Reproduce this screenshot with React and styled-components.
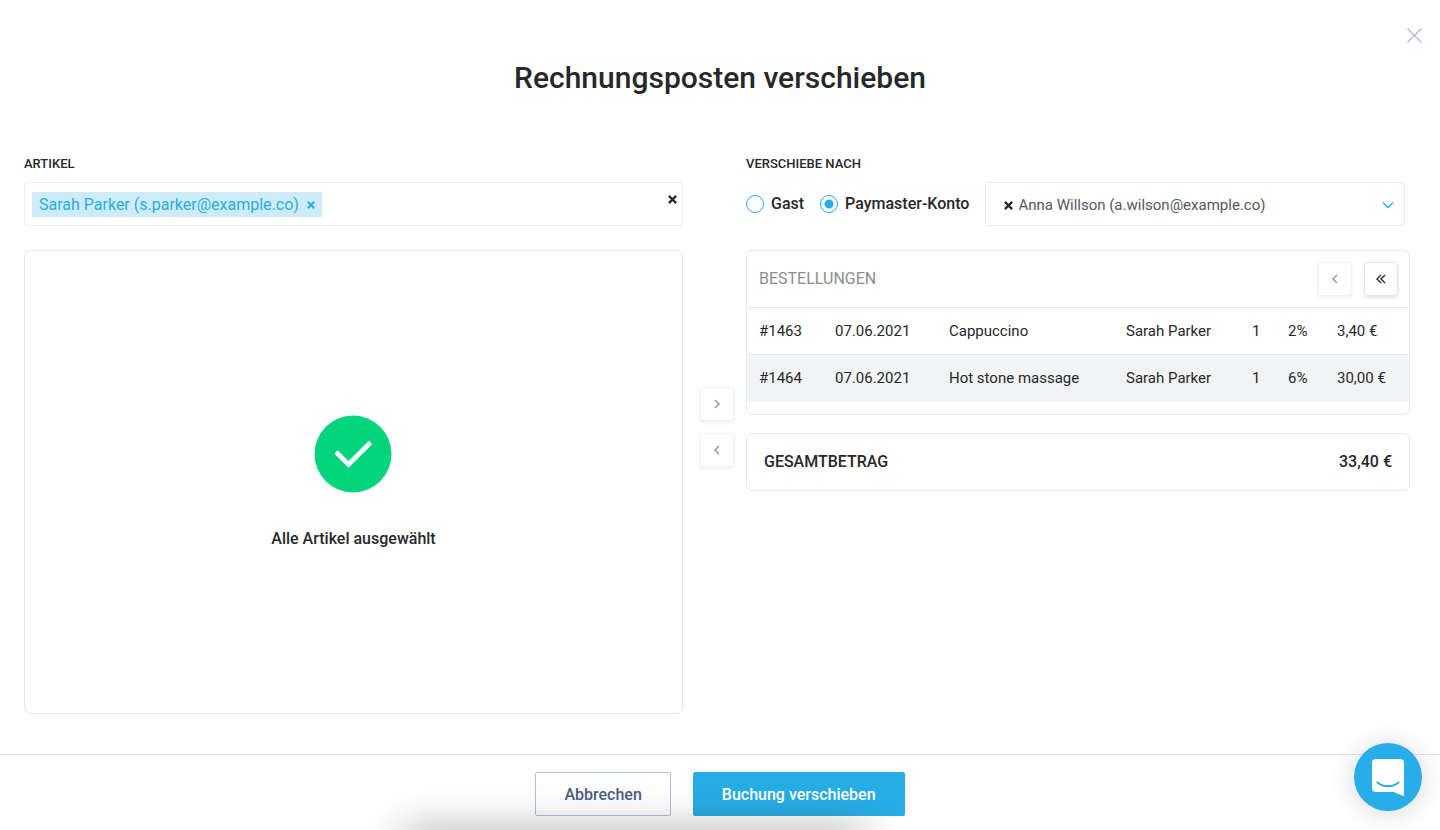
import React, { useState } from 'react';
import styled, { createGlobalStyle } from 'styled-components';

const GlobalStyle = createGlobalStyle`
  * {
    box-sizing: border-box;
  }
  body {
    margin: 0;
    background: #fff;
    color: #262829;
    font-family: Roboto, "Liberation Sans", sans-serif;
    font-size: 15px;
    line-height: 20px;
  }
  button, input, select {
    font: inherit;
    color: inherit;
  }
  button {
    padding: 0;
    border: 0;
    background: none;
    cursor: pointer;
  }
`

const Modal = styled.div`
  position: relative;
  display: flex;
  flex-direction: column;
  min-height: 100vh;
  overflow: hidden;
`

const CloseButton = styled.button`
  position: absolute;
  top: 28px;
  right: 18px;
  display: flex;
  color: #a9bad0;
`

const Title = styled.h1`
  margin: 0;
  padding: 58px 24px 56px;
  font-size: 30px;
  line-height: 40px;
  font-weight: 500;
  text-align: center;
`

const Content = styled.main`
  flex: 1;
  display: flex;
  padding: 0 30px 40px 24px;
`

const Column = styled.section`
  flex: ${(props) => props.$grow || 1} 1 0;
  min-width: 0;
  display: flex;
  flex-direction: column;
`

const ColumnLabel = styled.h2`
  margin: 0 0 9px;
  font-size: 13px;
  line-height: 19px;
  font-weight: 500;
  text-transform: uppercase;
`

const Field = styled.div`
  display: flex;
  align-items: center;
  flex: 1;
  height: 44px;
  border: 1px solid #e4ebf2;
  border-radius: 3px;
`

const TagField = styled(Field)`
  flex: none;
  padding: 0 5px 0 7px;
`

const Tag = styled.span`
  display: flex;
  align-items: center;
  gap: 8px;
  height: 25px;
  padding: 1px 7px 0;
  background: #ceecf8;
  color: #27ade5;
  font-size: 16px;
`

const TagInput = styled.input`
  flex: 1;
  min-width: 0;
  border: 0;
  outline: 0;
  background: none;
`

const ClearButton = styled.button`
  display: flex;
  align-self: ${(props) => (props.$top ? 'flex-start' : 'center')};
  padding: ${(props) => (props.$top ? '12px 0 0' : '0')};
`

const Panel = styled.div`
  margin-top: ${(props) => (props.$gap ? '18px' : '24px')};
  border: 1px solid #e6e9ee;
  border-radius: 6px;
`

const EmptyPanel = styled(Panel)`
  flex: 1;
  display: flex;
  flex-direction: column;
  align-items: center;
  justify-content: center;
  gap: 36px;
  font-size: 16px;
  font-weight: 500;
`

const Transfer = styled.div`
  display: flex;
  flex-direction: column;
  gap: 12px;
  margin: 233px 12px 0 17px;
`

const IconButton = styled.button`
  display: flex;
  align-items: center;
  justify-content: center;
  width: 34px;
  height: 34px;
  border: 1px solid #e1e5ef;
  border-radius: 3px;
  background: #fff;
  box-shadow: 0 2px 3px rgba(40, 50, 90, 0.12);
  &:disabled {
    opacity: 0.5;
    cursor: default;
  }
`

const TargetRow = styled.div`
  display: flex;
  align-items: center;
  padding-right: 5px;
`

const RadioLabel = styled.label`
  display: flex;
  align-items: center;
  gap: 7px;
  margin-right: 16px;
  font-size: 16px;
  line-height: 22px;
  font-weight: 500;
`

const Radio = styled.input.attrs({ type: 'radio' })`
  appearance: none;
  width: 18px;
  height: 18px;
  margin: 0;
  border: 1px solid #27ade8;
  border-radius: 50%;
  &:checked {
    background: radial-gradient(circle, #27ade8 4px, transparent 5px);
  }
`

const SelectField = styled(Field)`
  padding: 2px 10px 0 18px;
`

const Select = styled.select`
  flex: 1;
  min-width: 0;
  padding: 0 0 0 5px;
  border: 0;
  outline: 0;
  background: none;
  color: #555759;
  appearance: none;
`

const PanelHeader = styled.div`
  display: flex;
  align-items: center;
  gap: 12px;
  height: 56px;
  padding: 0 11px 0 12px;
`

const PanelTitle = styled.h3`
  flex: 1;
  margin: 0;
  color: #8b8d8f;
  font-size: 16px;
  font-weight: 400;
  text-transform: uppercase;
`

const Table = styled.table`
  width: 100%;
  margin-bottom: 12px;
  border-collapse: collapse;
  table-layout: fixed;
`

const Row = styled.tr`
  height: 47px;
  border-top: 1px solid #e6eaee;
  &:nth-child(even) {
    background: #f2f3f5;
  }
`

const Cell = styled.td`
  width: ${(props) => props.$width || 'auto'};
  padding: 0 0 0 12px;
  white-space: nowrap;
`

const TotalPanel = styled(Panel)`
  display: flex;
  align-items: center;
  justify-content: space-between;
  height: 58px;
  padding: 0 17px;
  font-size: 16px;
  font-weight: 500;
`

const Footer = styled.footer`
  position: relative;
  display: flex;
  justify-content: center;
  gap: 22px;
  padding: 17px 24px 14px;
  border-top: 1px solid #e0e6ea;
  &::after {
    content: '';
    position: absolute;
    top: 100%;
    left: 28%;
    width: 32%;
    height: 40px;
    box-shadow: 0 0 44px rgba(0, 0, 0, 0.32);
    pointer-events: none;
  }
`

const FooterButton = styled.button`
  height: 44px;
  padding: 2px 28px 0;
  border: 1px solid ${(props) => (props.$primary ? '#27ade5' : '#b3bfd2')};
  border-radius: 2px;
  background: ${(props) => (props.$primary ? '#27ade5' : 'transparent')};
  color: ${(props) => (props.$primary ? '#fff' : '#4d5d80')};
  font-size: 16px;
  font-weight: 500;
`

const ChatButton = styled.button`
  position: fixed;
  right: 18px;
  bottom: 19px;
  display: flex;
  align-items: center;
  justify-content: center;
  width: 68px;
  height: 68px;
  border-radius: 50%;
  background: #27ade8;
  box-shadow: 0 2px 28px rgba(0, 0, 0, 0.16);
`

const Cross = ({ size = 8 }) => (
  <svg width={size} height={size} viewBox="0 0 8 8" stroke="currentColor" strokeWidth="2" aria-hidden="true">
    <path d="M.8.8l6.4 6.4M7.2.8L.8 7.2" />
  </svg>
)

const icons = {
  left: 'M9 3L5 7l4 4',
  right: 'M5 3l4 4-4 4',
  doubleLeft: 'M7 3L3 7l4 4M11 3L7 7l4 4',
}

const Chevron = ({ name }) => (
  <svg width="14" height="14" viewBox="0 0 14 14" fill="none" stroke="currentColor" strokeWidth="1.4" aria-hidden="true">
    <path d={icons[name]} />
  </svg>
)

const orders = [
  { id: '#1463', date: '07.06.2021', name: 'Cappuccino', guest: 'Sarah Parker', amount: 1, tax: '2%', price: '3,40 €' },
  { id: '#1464', date: '07.06.2021', name: 'Hot stone massage', guest: 'Sarah Parker', amount: 1, tax: '6%', price: '30,00 €' },
]

const App = () => {

  const [target, setTarget] = useState('paymaster');

  return (
    <>
      <GlobalStyle />
      <Modal>
        <CloseButton aria-label="Schließen">
          <svg width="15" height="15" viewBox="0 0 15 15" stroke="currentColor" strokeWidth="1.2">
            <path d="M.5.5l14 14M14.5.5l-14 14" />
          </svg>
        </CloseButton>
        <Title>Rechnungsposten verschieben</Title>
        <Content>
          <Column $grow={131}>
            <ColumnLabel as="label" htmlFor="artikel">Artikel</ColumnLabel>
            <TagField>
              <Tag>
                Sarah Parker (s.parker@example.co)
                <ClearButton aria-label="Entfernen"><Cross /></ClearButton>
              </Tag>
              <TagInput id="artikel" type="text" />
              <ClearButton $top aria-label="Alle entfernen"><Cross size={9} /></ClearButton>
            </TagField>
            <EmptyPanel>
              <svg width="78" height="78" viewBox="0 0 78 78" fill="none" aria-hidden="true">
                <circle cx="39" cy="39" r="38.5" fill="#04d47c" />
                <path d="M22 37l12.5 12.5L56.5 27.5" stroke="#fff" strokeWidth="4.6" />
              </svg>
              <span>Alle Artikel ausgewählt</span>
            </EmptyPanel>
          </Column>

          <Transfer>
            <IconButton disabled aria-label="Nach rechts"><Chevron name="right" /></IconButton>
            <IconButton disabled aria-label="Nach links"><Chevron name="left" /></IconButton>
          </Transfer>

          <Column $grow={132}>
            <ColumnLabel>Verschiebe nach</ColumnLabel>
            <TargetRow>
              <RadioLabel>
                <Radio name="target" checked={target === 'guest'} onChange={() => setTarget('guest')} />
                Gast
              </RadioLabel>
              <RadioLabel>
                <Radio name="target" checked={target === 'paymaster'} onChange={() => setTarget('paymaster')} />
                Paymaster-Konto
              </RadioLabel>
              <SelectField>
                <ClearButton aria-label="Auswahl entfernen"><Cross size={9} /></ClearButton>
                <Select aria-label="Paymaster-Konto">
                  <option>Anna Willson (a.wilson@example.co)</option>
                </Select>
                <svg width="12" height="8" viewBox="0 0 12 8" fill="none" stroke="#27ade8" strokeWidth="1.5" aria-hidden="true">
                  <path d="M1 1.5l5 5 5-5" />
                </svg>
              </SelectField>
            </TargetRow>
            <Panel>
              <PanelHeader>
                <PanelTitle>Bestellungen</PanelTitle>
                <IconButton disabled aria-label="Zurück"><Chevron name="left" /></IconButton>
                <IconButton aria-label="Alle zurück"><Chevron name="doubleLeft" /></IconButton>
              </PanelHeader>
              <Table>
                <tbody>
                  {orders.map((order) => (
                    <Row key={order.id}>
                      <Cell $width="76px">{order.id}</Cell>
                      <Cell $width="114px">{order.date}</Cell>
                      <Cell>{order.name}</Cell>
                      <Cell $width="126px">{order.guest}</Cell>
                      <Cell $width="36px">{order.amount}</Cell>
                      <Cell $width="49px">{order.tax}</Cell>
                      <Cell $width="84px">{order.price}</Cell>
                    </Row>
                  ))}
                </tbody>
              </Table>
            </Panel>
            <TotalPanel $gap>
              <span>GESAMTBETRAG</span>
              <span>33,40 €</span>
            </TotalPanel>
          </Column>
        </Content>
        <Footer>
          <FooterButton>Abbrechen</FooterButton>
          <FooterButton $primary>Buchung verschieben</FooterButton>
        </Footer>
        <ChatButton aria-label="Chat öffnen">
          <svg width="32" height="37" viewBox="0 0 32 37" fill="none" aria-hidden="true">
            <path d="M4 0h24a4 4 0 0 1 4 4v33c-3-.8-7-2.2-10-4H4a4 4 0 0 1-4-4V4a4 4 0 0 1 4-4z" fill="#fff" />
            <path d="M5.5 23.5c6 5 15 5 21 0" stroke="#27ade8" strokeWidth="2" strokeLinecap="round" />
          </svg>
        </ChatButton>
      </Modal>
    </>
  );
}

export default App;
